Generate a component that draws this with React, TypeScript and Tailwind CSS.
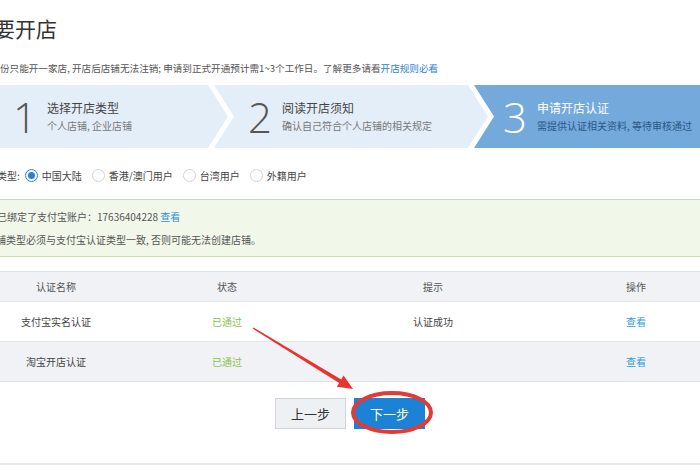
import type { ReactNode } from "react";

const FONT = "font-['Noto_Sans_CJK_SC','Noto_Sans',sans-serif]";

const STEPS = [
  {
    n: "1",
    title: "选择开店类型",
    sub: "个人店铺, 企业店铺",
  },
  {
    n: "2",
    title: "阅读开店须知",
    sub: "确认自己符合个人店铺的相关规定",
  },
  {
    n: "3",
    title: "申请开店认证",
    sub: "需提供认证相关资料, 等待审核通过",
  },
];

const REGIONS = ["中国大陆", "香港/澳门用户", "台湾用户", "外籍用户"];

const ROWS = [
  { name: "支付宝实名认证", status: "已通过", tip: "认证成功" },
  { name: "淘宝开店认证", status: "已通过", tip: "" },
];

function StepBody({ n, title, sub, active }: { n: string; title: string; sub: string; active?: boolean }) {
  return (
    <div className="flex h-full items-center">
      <span
        className={`w-[34px] font-['Open_Sans',sans-serif] text-[42px] leading-none font-light ${
          active ? "text-white" : "text-[#555]"
        }`}
      >
        {n}
      </span>
      <div className="flex flex-col gap-[3px]">
        <span className={`text-[12px] leading-[16px] ${active ? "text-white" : "text-[#444]"}`}>{title}</span>
        <span className={`text-[10px] leading-[14px] ${active ? "text-[#2a5887]" : "text-[#777]"}`}>{sub}</span>
      </div>
    </div>
  );
}

function Radio({ label, checked }: { label: string; checked?: boolean }) {
  return (
    <label className="flex items-center gap-[4px]">
      <span
        className={`flex h-[13px] w-[13px] items-center justify-center rounded-full border bg-white ${
          checked ? "border-[#2d7fd2]" : "border-[#d3d3d3]"
        }`}
      >
        {checked && <span className="h-[7px] w-[7px] rounded-full bg-[#2d7fd2]" />}
      </span>
      <span className="text-[10px] text-[#444]">{label}</span>
    </label>
  );
}

function Cell({ children, className = "" }: { children?: ReactNode; className?: string }) {
  return <div className={`flex items-center justify-center text-[10px] ${className}`}>{children}</div>;
}

export default function App() {
  return (
    <div className={`relative h-[470px] w-[700px] overflow-hidden bg-white ${FONT}`}>
      {/* header */}
      <div className="flex h-[56px] items-center">
        <h1 className="-ml-[6px] text-[21px] leading-none font-normal text-[#333]">要开店</h1>
      </div>
      <div className="flex h-[24px] items-center">
        <p className="text-[9.6px] text-[#555]">
          份只能开一家店, 开店后店铺无法注销; 申请到正式开通预计需1~3个工作日。了解更多请看
          <span className="text-[#2f7fd1]">开店规则必看</span>
        </p>
      </div>

      {/* step bar */}
      <div className="mt-[5px] flex h-[63px]">
        <div className="-mr-[14px] w-[228px] shrink-0 bg-[#e4eef9] pl-[13px] [clip-path:polygon(0_0,208px_0,228px_50%,208px_100%,0_100%)]">
          <StepBody {...STEPS[0]} />
        </div>
        <div className="-mr-[14px] w-[274px] shrink-0 bg-[#e4eef9] pl-[34px] [clip-path:polygon(0_0,254px_0,274px_50%,254px_100%,0_100%,20px_50%)]">
          <StepBody {...STEPS[1]} />
        </div>
        <div className="flex-1 bg-[#74a9dc] pl-[29px] [clip-path:polygon(0_0,100%_0,100%_100%,0_100%,20px_50%)]">
          <StepBody {...STEPS[2]} active />
        </div>
      </div>

      {/* region type */}
      <div className="mt-[17px] flex h-[20px] items-center">
        <span className="-ml-[3px] mr-[5px] text-[10px] text-[#444]">类型:</span>
        <div className="flex items-center gap-[10px]">
          {REGIONS.map((r, i) => (
            <Radio key={r} label={r} checked={i === 0} />
          ))}
        </div>
      </div>

      {/* notice */}
      <div className="mt-[14px] flex h-[58px] flex-col justify-center gap-[9px] border-y border-[#c9dcb5] bg-[#f1f8ea] text-[10px] text-[#555]">
        <p className="-ml-[3px] leading-[14px]">
          已绑定了支付宝账户：17636404228 <span className="text-[#2d8fe0]">查看</span>
        </p>
        <p className="-ml-[14px] leading-[14px]">店铺类型必须与支付宝认证类型一致, 否则可能无法创建店铺。</p>
      </div>

      {/* auth table */}
      <div className="mt-[14px] w-[748px] border-y border-[#dfe3e8]">
        <div className="grid h-[29px] grid-cols-[112px_230px_182px_224px] bg-[#f0f2f5] text-[#555]">
          <Cell>认证名称</Cell>
          <Cell>状态</Cell>
          <Cell>提示</Cell>
          <Cell>操作</Cell>
        </div>
        {ROWS.map((row, i) => (
          <div
            key={row.name}
            className={`grid h-[40px] grid-cols-[112px_230px_182px_224px] border-t border-[#e3e6ea] ${
              i % 2 ? "bg-[#f0f2f5]" : "bg-white"
            }`}
          >
            <Cell className="text-[#444]">{row.name}</Cell>
            <Cell className="text-[#8cc152]">{row.status}</Cell>
            <Cell className="text-[#444]">{row.tip}</Cell>
            <Cell className="text-[#2d9be0]">查看</Cell>
          </div>
        ))}
      </div>

      {/* actions */}
      <div className="mt-[16px] flex justify-center gap-[8px]">
        <button className="h-[31px] w-[71px] border border-[#cfd4da] bg-[#eef1f4] text-[13px] text-[#333]">
          上一步
        </button>
        <button className="h-[31px] w-[71px] bg-[#1b82d6] text-[13px] text-white">下一步</button>
      </div>

      <div className="mt-[34px] h-[2px] bg-[#e8e8e8]" />

      {/* red annotation */}
      <svg className="pointer-events-none absolute inset-0" width="700" height="470" viewBox="0 0 700 470">
        <polygon
          points="253.4,327.4 341.2,379.5 343.6,375.6 353,389 336.8,386.8 339.2,382.9 252.6,328.6"
          fill="#e8332f"
        />
        <ellipse cx="392" cy="412.5" rx="39" ry="19.5" fill="none" stroke="#e53935" strokeWidth="4" />
      </svg>
    </div>
  );
}
